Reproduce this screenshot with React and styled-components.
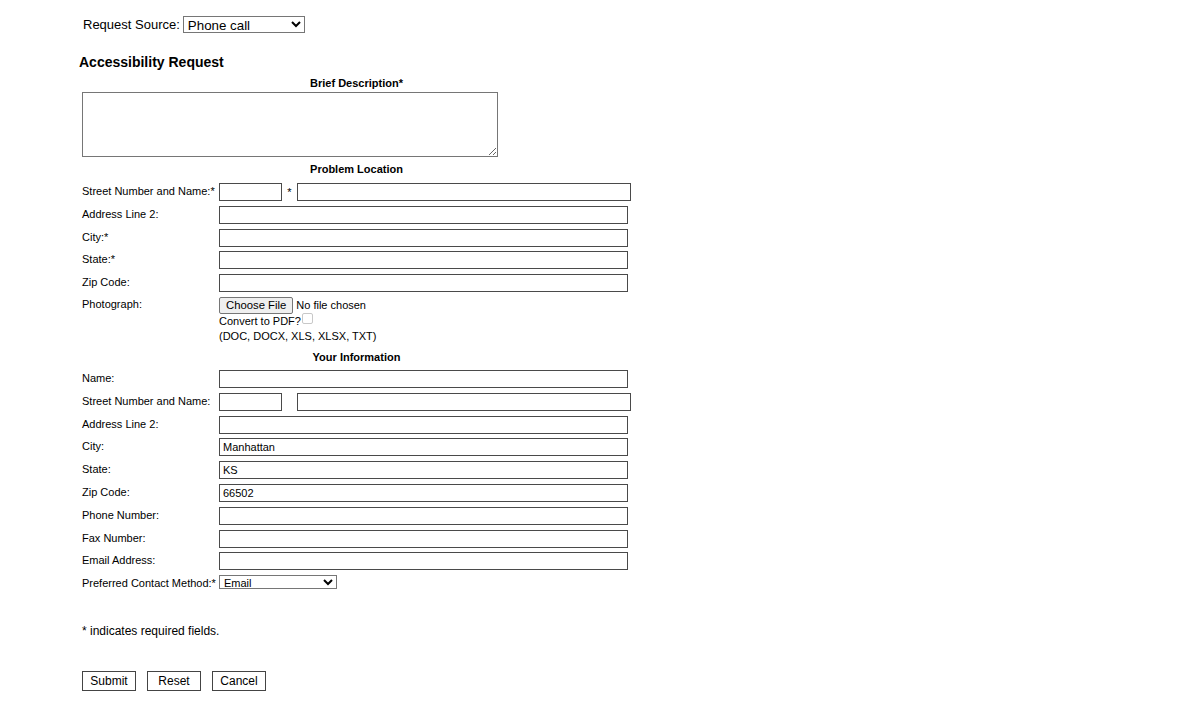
import React from "react";
import styled, { createGlobalStyle } from "styled-components";

const Global = createGlobalStyle`
  html, body { margin: 0; padding: 0; background: #fff; }
  body { font-family: "Liberation Sans", Arial, sans-serif; color: #000; }
  * { box-sizing: border-box; }
`;

const Page = styled.div`
  padding: 16px 0 0 79px;
  width: 1200px;
  height: 708px;
`;

const SourceRow = styled.div`
  display: flex;
  align-items: center;
  gap: 3px;
  margin-left: 4px;
  height: 17px;
`;

const SourceLabel = styled.label`
  font-size: 13px;
  line-height: 17px;
`;

const Select = styled.select`
  font-family: "Liberation Sans", Arial, sans-serif;
  font-size: ${(p) => (p.$small ? "11px" : "13.33px")};
  width: ${(p) => p.$w}px;
  height: ${(p) => p.$h}px;
  padding: 0;
  margin: 0;
  border: 1px solid #767676;
  border-radius: 0;
  background: #fff;
  color: #000;
`;

const Title = styled.h2`
  margin: 21px 0 0;
  font-size: 14px;
  line-height: 17px;
  font-weight: bold;
`;

const Form = styled.div`
  margin: 6px 0 0 3px;
  width: 549px;
`;

const Caption = styled.div`
  font-size: 11px;
  line-height: 13px;
  font-weight: bold;
  text-align: center;
  margin-top: ${(p) => p.$mt || 0}px;
`;

const DescArea = styled.textarea`
  display: block;
  margin-top: 2px;
  width: 416px;
  height: 65px;
  border: 1px solid #767676;
  border-radius: 0;
  font-family: "Liberation Sans", Arial, sans-serif;
  font-size: 11px;
  padding: 2px;
`;

const Fields = styled.div`
  display: grid;
  grid-auto-rows: 22.8px;
  margin-top: ${(p) => p.$mt}px;
`;

const Row = styled.div`
  display: grid;
  grid-template-columns: 137px 1fr;
  align-items: start;
`;

const Label = styled.label`
  font-size: 11px;
  line-height: ${(p) => (p.$tight ? "14px" : "17px")};
  white-space: nowrap;
`;

const Cell = styled.div`
  display: flex;
  align-items: center;
`;

const TextInput = styled.input`
  width: ${(p) => p.$w}px;
  height: 18px;
  margin: 0;
  padding: 0 3px;
  border: 1px solid #4a4a4a;
  border-radius: 0;
  font-family: "Liberation Sans", Arial, sans-serif;
  font-size: 11px;
  color: #000;
  background: #fff;
`;

const Sep = styled.span`
  width: 15px;
  text-align: center;
  font-size: 11px;
  line-height: 18px;
`;

const UploadCell = styled.div`
  display: flex;
  flex-direction: column;
  font-size: 11px;
`;

const FileLine = styled.div`
  display: flex;
  align-items: center;
  gap: 3px;
  height: 17px;
`;

const FileButton = styled.button`
  height: 17px;
  padding: 0 6px;
  margin: 0;
  font-family: "Liberation Sans", Arial, sans-serif;
  font-size: 11.3px;
  background: #efefef;
  border: 1px solid #767676;
  border-radius: 2px;
  color: #000;
`;

const ConvertLine = styled.div`
  display: flex;
  align-items: center;
  height: 14px;
  line-height: 14px;
`;

const Check = styled.input`
  appearance: none;
  width: 11px;
  height: 11px;
  margin: -4px 0 0 1px;
  border: 1px solid #c8c8c8;
  border-radius: 2px;
  background: #fff;
`;

const Types = styled.div`
  line-height: 16px;
`;

const Note = styled.p`
  margin: 26px 0 0 3px;
  font-size: 12px;
  line-height: 14px;
`;

const Buttons = styled.div`
  display: flex;
  gap: 11px;
  margin: 33px 0 0 3px;
`;

const Btn = styled.button`
  width: 54px;
  height: 20px;
  padding: 0;
  margin: 0;
  background: #fff;
  border: 1px solid #444;
  border-radius: 0;
  font-family: "Liberation Sans", Arial, sans-serif;
  font-size: 12px;
  color: #000;
`;

function Field({ label, value = "" }) {
  return (
    <Row>
      <Label>{label}</Label>
      <Cell>
        <TextInput $w={409} defaultValue={value} />
      </Cell>
    </Row>
  );
}

function StreetField({ label, star }) {
  return (
    <Row>
      <Label>{label}</Label>
      <Cell>
        <TextInput $w={63} />
        <Sep>{star ? "*" : ""}</Sep>
        <TextInput $w={334} />
      </Cell>
    </Row>
  );
}

export default function App() {
  return (
    <>
      <Global />
      <Page>
        <SourceRow>
          <SourceLabel>Request Source:</SourceLabel>
          <Select $w={122} $h={17} defaultValue="Phone call">
            <option>Phone call</option>
            <option>Email</option>
            <option>Walk-in</option>
          </Select>
        </SourceRow>
        <Title>Accessibility Request</Title>
        <Form>
          <Caption>Brief Description*</Caption>
          <DescArea />
          <Caption $mt={6}>Problem Location</Caption>
          <Fields $mt={7}>
            <StreetField label="Street Number and Name:*" star />
            <Field label="Address Line 2:" />
            <Field label="City:*" />
            <Field label="State:*" />
            <Field label="Zip Code:" />
          </Fields>
          <Row>
            <Label $tight>Photograph:</Label>
            <UploadCell>
              <FileLine>
                <FileButton type="button">Choose File</FileButton>
                <span>No file chosen</span>
              </FileLine>
              <ConvertLine>
                Convert to PDF?<Check type="checkbox" />
              </ConvertLine>
              <Types>(DOC, DOCX, XLS, XLSX, TXT)</Types>
            </UploadCell>
          </Row>
          <Caption $mt={7}>Your Information</Caption>
          <Fields $mt={6}>
            <Field label="Name:" />
            <StreetField label="Street Number and Name:" />
            <Field label="Address Line 2:" />
            <Field label="City:" value="Manhattan" />
            <Field label="State:" value="KS" />
            <Field label="Zip Code:" value="66502" />
            <Field label="Phone Number:" />
            <Field label="Fax Number:" />
            <Field label="Email Address:" />
            <Row>
              <Label>Preferred Contact Method:*</Label>
              <Cell>
                <Select $small $w={118} $h={14} defaultValue="Email">
                  <option>Email</option>
                  <option>Phone</option>
                  <option>Fax</option>
                  <option>Mail</option>
                </Select>
              </Cell>
            </Row>
          </Fields>
        </Form>
        <Note>* indicates required fields.</Note>
        <Buttons>
          <Btn type="button">Submit</Btn>
          <Btn type="button">Reset</Btn>
          <Btn type="button">Cancel</Btn>
        </Buttons>
      </Page>
    </>
  );
}
